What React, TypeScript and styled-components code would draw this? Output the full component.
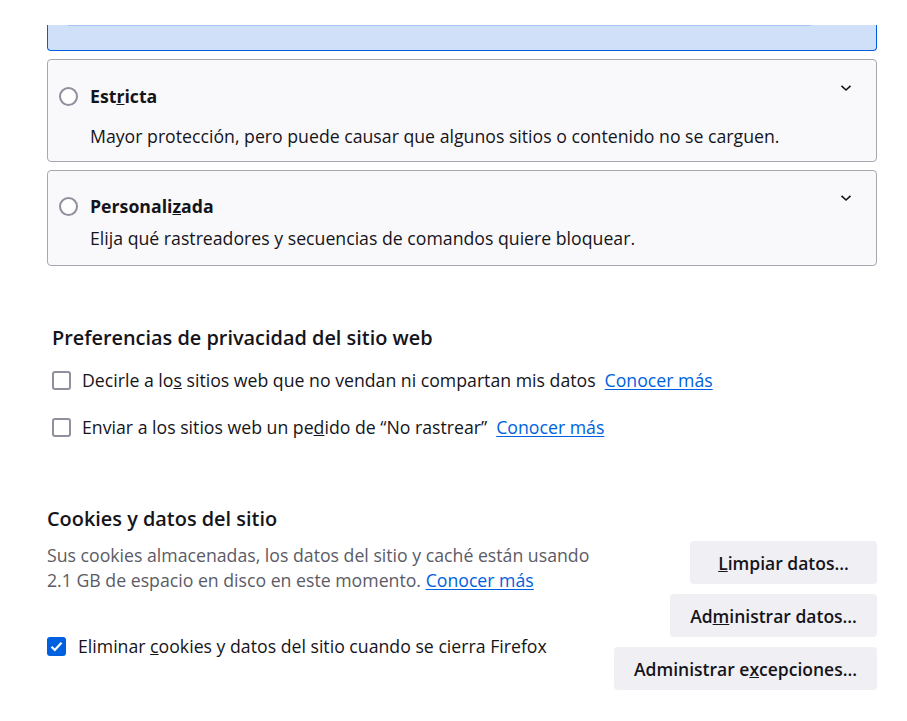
import React from "react";
import styled, { createGlobalStyle } from "styled-components";

const Global = createGlobalStyle`
  html, body { margin: 0; padding: 0; background: #ffffff; }
  body {
    font-family: "Open Sans", "Noto Sans", sans-serif;
    color: #15141a;
    font-size: 17.7px;
  }
  * { box-sizing: border-box; }
`;

const Page = styled.div`
  width: 907px;
  height: 721px;
  overflow: hidden;
  padding: 0 30px 0 47px;
  display: flex;
  flex-direction: column;
`;

const TopGap = styled.div`
  height: 25px;
  flex: none;
`;

const SelectedCard = styled.div`
  height: 26px;
  flex: none;
  background: #cfe0f8;
  border: 1px solid #0061e0;
  border-top: none;
  border-radius: 0 0 4px 4px;
  display: flex;
  justify-content: center;
`;

const InnerLine = styled.div`
  width: 743px;
  margin-left: -45px;
  height: 1px;
  background: #a8c6f2;
`;

const Card = styled.div<{ $mt: number; $pt: number; $pb: number }>`
  margin-top: ${(p) => p.$mt}px;
  background: #f9f9fb;
  border: 1px solid #a7a7b0;
  border-radius: 4px;
  padding: ${(p) => p.$pt}px 16px ${(p) => p.$pb}px 11px;
  display: flex;
  flex-direction: column;
`;

const CardHeader = styled.div`
  display: flex;
  align-items: center;
  height: 26px;
`;

const Radio = styled.span`
  width: 19px;
  height: 19px;
  border: 2px solid #8f8f9d;
  border-radius: 50%;
  background: #ffffff;
  flex: none;
`;

const CardTitle = styled.span`
  font-weight: 700;
  margin-left: 12px;
  flex: 1;
`;

const Chevron = styled.span`
  align-self: flex-start;
  margin-top: -3px;
  width: 16px;
  height: 16px;
  display: flex;
  align-items: center;
  justify-content: center;
  margin-right: 6px;
`;

const CardDesc = styled.div<{ $mt: number }>`
  margin-top: ${(p) => p.$mt}px;
  margin-left: 31px;
  line-height: 26px;
`;

const PrivacySection = styled.section`
  margin-top: 59px;
  padding-left: 5px;
  display: flex;
  flex-direction: column;
`;

const Heading = styled.h2`
  margin: 0;
  font-size: 19.9px;
  font-weight: 600;
  line-height: 26px;
`;

const CheckRow = styled.label<{ $mt: number }>`
  margin-top: ${(p) => p.$mt}px;
  display: flex;
  align-items: center;
  height: 26px;
`;

const Box = styled.span<{ $checked?: boolean }>`
  width: 19px;
  height: 19px;
  border-radius: 3px;
  flex: none;
  display: flex;
  align-items: center;
  justify-content: center;
  background: ${(p) => (p.$checked ? "#0061e0" : "#ffffff")};
  border: ${(p) => (p.$checked ? "none" : "2px solid #8f8f9d")};
`;

const CheckText = styled.span<{ $gap: number }>`
  margin-left: ${(p) => p.$gap}px;
`;

const Link = styled.a`
  color: #0061e0;
  text-decoration: underline;
  text-underline-offset: 2px;
  margin-left: 9px;
`;

const InlineLink = styled(Link)`
  margin-left: 0;
`;

const CookiesSection = styled.section`
  margin-top: 66px;
  display: flex;
  flex-direction: column;
`;

const CookiesBody = styled.div`
  margin-top: 9px;
  display: flex;
  justify-content: space-between;
  align-items: flex-start;
`;

const LeftCol = styled.div`
  display: flex;
  flex-direction: column;
`;

const Muted = styled.p`
  margin: 2px 0 0;
  color: #5b5b66;
  line-height: 25px;
`;

const ButtonCol = styled.div`
  display: flex;
  flex-direction: column;
  align-items: flex-end;
  gap: 10px;
`;

const Button = styled.button<{ $w: number }>`
  width: ${(p) => p.$w}px;
  height: 43px;
  border: none;
  border-radius: 4px;
  background: #f0f0f4;
  color: #15141a;
  font-family: inherit;
  font-size: 17.5px;
  font-weight: 600;
  padding: 0;
`;

const ChevronIcon = () => (
  <svg width="12" height="8" viewBox="0 0 12 8" fill="none">
    <path d="M1.5 1.8 L6 6 L10.5 1.8" stroke="#15141a" strokeWidth="1.6" />
  </svg>
);

const CheckIcon = () => (
  <svg width="13" height="11" viewBox="0 0 13 11" fill="none">
    <path d="M1.5 5.8 L4.8 9 L11.5 1.8" stroke="#ffffff" strokeWidth="2.2" />
  </svg>
);

export default function App() {
  return (
    <>
      <Global />
      <Page>
        <TopGap />
        <SelectedCard>
          <InnerLine />
        </SelectedCard>

        <Card $mt={8} $pt={23} $pb={12}>
          <CardHeader>
            <Radio />
            <CardTitle>
              Est<u>r</u>icta
            </CardTitle>
            <Chevron>
              <ChevronIcon />
            </Chevron>
          </CardHeader>
          <CardDesc $mt={14}>
            Mayor protección, pero puede causar que algunos sitios o contenido no se carguen.
          </CardDesc>
        </Card>

        <Card $mt={8} $pt={22} $pb={14}>
          <CardHeader>
            <Radio />
            <CardTitle>
              Personali<u>z</u>ada
            </CardTitle>
            <Chevron>
              <ChevronIcon />
            </Chevron>
          </CardHeader>
          <CardDesc $mt={6}>
            Elija qué rastreadores y secuencias de comandos quiere bloquear.
          </CardDesc>
        </Card>

        <PrivacySection>
          <Heading>Preferencias de privacidad del sitio web</Heading>
          <CheckRow $mt={16}>
            <Box />
            <CheckText $gap={11}>
              Decirle a lo<u>s</u> sitios web que no vendan ni compartan mis datos
            </CheckText>
            <Link href="#">Conocer más</Link>
          </CheckRow>
          <CheckRow $mt={21}>
            <Box />
            <CheckText $gap={11}>
              Enviar a los sitios web un pe<u>d</u>ido de “No rastrear”
            </CheckText>
            <Link href="#">Conocer más</Link>
          </CheckRow>
        </PrivacySection>

        <CookiesSection>
          <Heading>Cookies y datos del sitio</Heading>
          <CookiesBody>
            <LeftCol>
              <Muted>
                Sus cookies almacenadas, los datos del sitio y caché están usando
                <br />
                2.1 GB de espacio en disco en este momento.{" "}
                <InlineLink href="#">Conocer más</InlineLink>
              </Muted>
              <CheckRow $mt={40}>
                <Box $checked>
                  <CheckIcon />
                </Box>
                <CheckText $gap={12}>
                  Eliminar <u>c</u>ookies y datos del sitio cuando se cierra Firefox
                </CheckText>
              </CheckRow>
            </LeftCol>
            <ButtonCol>
              <Button $w={187}>
                <u>L</u>impiar datos…
              </Button>
              <Button $w={207}>
                Ad<u>m</u>inistrar datos…
              </Button>
              <Button $w={263}>
                Administrar e<u>x</u>cepciones…
              </Button>
            </ButtonCol>
          </CookiesBody>
        </CookiesSection>
      </Page>
    </>
  );
}
